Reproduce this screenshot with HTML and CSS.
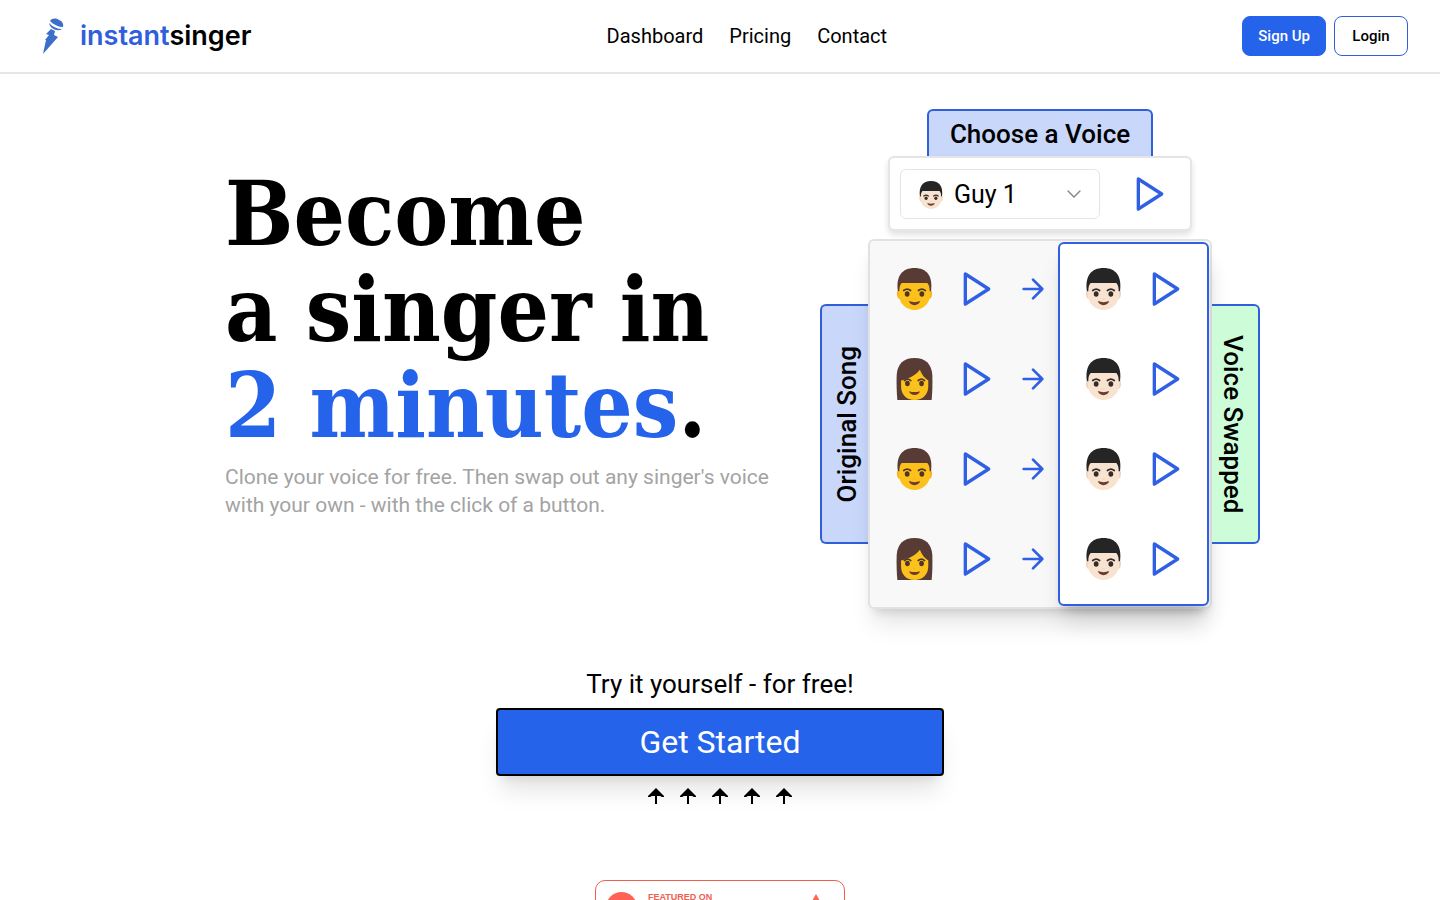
FILE: index.html
```html
<!DOCTYPE html>
<html lang="en">

<head>
    <meta charset="UTF-8" />
    <meta name="viewport" content="width=device-width, initial-scale=1.0" />
    <title>instantsinger</title>
    <link rel="stylesheet" href="styles.css">
</head>

<body>
    <!-- shared icons -->
    <svg class="sprite" aria-hidden="true">
        <symbol id="play" viewBox="0 0 24 24">
            <polygon points="5 3 19 12 5 21" fill="none" stroke="currentColor" stroke-width="2" stroke-linejoin="round" />
        </symbol>
        <symbol id="arrow" viewBox="0 0 24 24">
            <path d="M5 12h14M12 5l7 7-7 7" fill="none" stroke="currentColor" stroke-width="2" stroke-linecap="round" stroke-linejoin="round" />
        </symbol>
        <symbol id="arrow-up" viewBox="0 0 16 16">
            <path d="M8 0l8 8v1h-2l-2-1H9v8H7V8H4L2 9H0V8z" fill="currentColor" />
        </symbol>
        <symbol id="man" viewBox="0 0 105 123">
            <path class="ear" d="M6 66c-5 0-6 8-4 15 1 6 4 10 9 9zM99 66c5 0 6 8 4 15-1 6-4 10-9 9z" />
            <path class="skin" d="M6 38h93v36c0 31-23 49-46.500 49S6 105 6 74z" />
            <path class="hair" d="M4 68C-2 24 16 0 52.500 0S107 24 101 68h-4c0-12-2-19-7-24H15c-5 5-7 12-7 24z" />
            <path class="brow" d="M21 66q10-8 20 0M64 66q10-8 20 0" />
            <ellipse class="eye" cx="31" cy="76" rx="7" ry="8" />
            <ellipse class="eye" cx="74" cy="76" rx="7" ry="8" />
            <path class="nose" d="M46 88q6 3 13 0l-4 4h-5z" />
            <path class="mouth" d="M36 97q17 6 33 0c-3 16-30 16-33 0z" />
        </symbol>
        <symbol id="woman" viewBox="0 0 108 125">
            <path class="hair" d="M3 125C1 105 0 78 1 50 3 18 22 0 54 0s51 18 53 50c1 28 0 55-2 75z" />
            <path class="skin" d="M14 67c24-6 44-16 56-32 6 16 14 25 25 32v17c0 25-17 41-41 41S14 109 14 84z" />
            <path class="brow" d="M24 67q10-8 19 0M65 67q10-8 19 0" />
            <ellipse class="eye" cx="33" cy="76" rx="7" ry="8" />
            <ellipse class="eye" cx="75" cy="76" rx="7" ry="8" />
            <path class="nose" d="M48 89q6 3 12 0l-4 4h-4z" />
            <path class="mouth" d="M38 99q16 5 32 0c-3 15-29 15-32 0z" />
        </symbol>
    </svg>

    <header class="header">
        <a class="logo" href="#">
            <svg class="logo-icon" viewBox="0 0 32 40" aria-hidden="true">
                <path d="M18 5c2-3 6-3 9-1 3 1 5 4 4 7-4 0-9-2-13-6z" />
                <path d="M17 7c4 4 8 6 13 6-4 3-12 0-13-6z" />
                <path d="M19 13l4 2-1 4 4 2L11 38l3-14h-1l4-5-3-1z" />
            </svg>
            <span><span class="blue">instant</span>singer</span>
        </a>
        <nav class="nav">
            <a href="#">Dashboard</a>
            <a href="#">Pricing</a>
            <a href="#">Contact</a>
        </nav>
        <div class="account">
            <button class="btn btn-primary">Sign Up</button>
            <button class="btn">Login</button>
        </div>
    </header>

    <main>
        <section class="hero">
            <div class="intro">
                <h1>Become<br>a singer in<br><span>2 minutes</span>.</h1>
                <p>Clone your voice for free. Then swap out any singer's voice with your own - with the click of a button.</p>
            </div>

            <div class="demo">
                <label class="tab tab-top" for="voice">Choose a Voice</label>
                <div class="chooser">
                    <div class="select-wrap">
                        <svg class="face light select-face"><use href="#man" /></svg>
                        <select id="voice">
                            <option>Guy 1</option>
                        </select>
                        <svg class="chevron" viewBox="0 0 16 16" aria-hidden="true"><path d="M2 5l6 6 6-6" /></svg>
                    </div>
                    <button class="play" aria-label="Play voice"><svg><use href="#play" /></svg></button>
                </div>

                <div class="board">
                    <div class="tab tab-left"><span>Original Song</span></div>
                    <div class="panel">
                        <div class="originals">
                            <div class="row">
                                <svg class="face"><use href="#man" /></svg>
                                <button class="play" aria-label="Play original 1"><svg><use href="#play" /></svg></button>
                                <svg class="arrow"><use href="#arrow" /></svg>
                            </div>
                            <div class="row">
                                <svg class="face"><use href="#woman" /></svg>
                                <button class="play" aria-label="Play original 2"><svg><use href="#play" /></svg></button>
                                <svg class="arrow"><use href="#arrow" /></svg>
                            </div>
                            <div class="row">
                                <svg class="face"><use href="#man" /></svg>
                                <button class="play" aria-label="Play original 3"><svg><use href="#play" /></svg></button>
                                <svg class="arrow"><use href="#arrow" /></svg>
                            </div>
                            <div class="row">
                                <svg class="face"><use href="#woman" /></svg>
                                <button class="play" aria-label="Play original 4"><svg><use href="#play" /></svg></button>
                                <svg class="arrow"><use href="#arrow" /></svg>
                            </div>
                        </div>
                        <div class="swapped">
                            <div class="row">
                                <svg class="face light"><use href="#man" /></svg>
                                <button class="play" aria-label="Play swapped 1"><svg><use href="#play" /></svg></button>
                            </div>
                            <div class="row">
                                <svg class="face light"><use href="#man" /></svg>
                                <button class="play" aria-label="Play swapped 2"><svg><use href="#play" /></svg></button>
                            </div>
                            <div class="row">
                                <svg class="face light"><use href="#man" /></svg>
                                <button class="play" aria-label="Play swapped 3"><svg><use href="#play" /></svg></button>
                            </div>
                            <div class="row">
                                <svg class="face light"><use href="#man" /></svg>
                                <button class="play" aria-label="Play swapped 4"><svg><use href="#play" /></svg></button>
                            </div>
                        </div>
                    </div>
                    <div class="tab tab-right"><span>Voice Swapped</span></div>
                </div>
            </div>
        </section>

        <section class="cta">
            <p>Try it yourself - for free!</p>
            <button class="start">Get Started</button>
            <div class="arrows">
                <svg><use href="#arrow-up" /></svg>
                <svg><use href="#arrow-up" /></svg>
                <svg><use href="#arrow-up" /></svg>
                <svg><use href="#arrow-up" /></svg>
                <svg><use href="#arrow-up" /></svg>
            </div>
        </section>

        <a class="badge" href="#">
            <span class="badge-dot"></span>
            <span class="badge-text">FEATURED ON</span>
            <svg class="badge-vote" viewBox="0 0 10 9" aria-hidden="true"><path d="M5 0l5 9H0z" /></svg>
        </a>
    </main>
</body>

</html>
```

FILE: styles.css
```css
* {
    box-sizing: border-box;
}

body {
    margin: 0;
    font-family: Roboto, "Liberation Sans", sans-serif;
    color: #000;
    background-color: #fff;
}

a {
    color: inherit;
    text-decoration: none;
}

button,
select {
    font-family: inherit;
    color: inherit;
    cursor: pointer;
}

h1,
p {
    margin: 0;
}

svg {
    display: block;
}

.sprite {
    display: none;
}

/* header */

.header {
    display: flex;
    align-items: center;
    justify-content: space-between;
    height: 74px;
    padding: 0 32px;
    border-bottom: 2px solid #e5e5e5;
}

.logo {
    display: flex;
    align-items: center;
    gap: 16px;
    font-family: Inter, "Open Sans", sans-serif;
    font-size: 27px;
    font-weight: 600;
    line-height: 32px;
}

.logo-icon {
    width: 32px;
    height: 40px;
    fill: #3b6fc9;
}

.blue {
    color: #2f5fda;
}

.nav {
    display: flex;
    gap: 26px;
    font-size: 20px;
}

.account {
    display: flex;
    gap: 8px;
}

.btn {
    min-width: 74px;
    height: 40px;
    padding: 0 15px;
    font-size: 15px;
    font-weight: 500;
    background-color: #fff;
    border: 1px solid #2f5fda;
    border-radius: 8px;
}

.btn-primary {
    color: #fff;
    background-color: #2563eb;
    border-color: #2563eb;
}

/* hero */

.hero {
    display: flex;
    justify-content: space-between;
    max-width: 1080px;
    margin: 0 auto;
    padding-top: 35px;
}

.intro {
    max-width: 590px;
    padding: 56px 0 0 45px;
}

h1 {
    font-family: "DejaVu Serif Condensed", "DejaVu Serif", serif;
    font-size: 90px;
    font-weight: 700;
    line-height: 96px;
    white-space: nowrap;
}

h1 span {
    color: #2563eb;
}

.intro p {
    margin-top: 10px;
    font-size: 21px;
    line-height: 28px;
    color: #a3a3a3;
}

.demo {
    display: flex;
    flex-direction: column;
    align-items: center;
}

.tab {
    display: flex;
    align-items: center;
    justify-content: center;
    font-size: 26px;
    font-weight: 500;
    background-color: #c8d7fa;
    border: 2px solid #2f5fda;
}

.tab-top {
    width: 226px;
    height: 47px;
    border-bottom: none;
    border-radius: 6px 6px 0 0;
}

.tab-left,
.tab-right {
    width: 48px;
    height: 240px;
}

.tab span {
    writing-mode: vertical-rl;
    white-space: nowrap;
}

.tab-left {
    padding-left: 4px;
    border-right: none;
    border-radius: 6px 0 0 6px;
}

.tab-left span {
    transform: rotate(180deg);
}

.tab-right {
    padding-right: 4px;
    background-color: #ccfdd8;
    border-left: none;
    border-radius: 0 6px 6px 0;
}

.chooser {
    display: flex;
    align-items: center;
    gap: 30px;
    width: 304px;
    height: 75px;
    padding: 0 10px;
    background-color: #fff;
    border: 2px solid #e5e5e5;
    border-radius: 6px;
    box-shadow: 0 4px 6px rgba(0, 0, 0, 0.12);
}

.select-wrap {
    position: relative;
}

select {
    width: 200px;
    height: 50px;
    padding: 2px 36px 0 53px;
    font-size: 25px;
    background-color: #fff;
    border: 1px solid #e5e5e5;
    border-radius: 6px;
    appearance: none;
}

.face {
    --skin: #fcc21b;
    --ear: #f8ae1c;
    --hair: #583b35;
    --line: #4f352e;
    width: 45px;
    height: 42px;
}

.light {
    --skin: #f7e3cf;
    --ear: #f0d2bb;
    --hair: #252525;
    --line: #352b28;
}

.select-face {
    position: absolute;
    top: 12px;
    left: 16px;
    width: 30px;
    height: 28px;
}

.skin {
    fill: var(--skin);
}

.ear {
    fill: var(--ear);
}

.hair {
    fill: var(--hair);
}

.eye {
    fill: var(--line);
}

.brow {
    fill: none;
    stroke: var(--line);
    stroke-width: 5;
    stroke-linecap: round;
}

.nose {
    fill: var(--ear);
}

.mouth {
    fill: #6d3a2e;
}

.chevron {
    position: absolute;
    top: 17px;
    right: 18px;
    width: 16px;
    height: 16px;
    fill: none;
    stroke: #808080;
    stroke-width: 1.3;
    stroke-linecap: round;
    pointer-events: none;
}

.play {
    width: 40px;
    height: 40px;
    padding: 0;
    color: #2f5fe3;
    background: none;
    border: none;
}

.play svg {
    width: 40px;
    height: 40px;
}

.arrow {
    width: 32px;
    height: 32px;
    color: #2f5fe3;
}

.board {
    display: flex;
    align-items: center;
    margin-top: 8px;
}

.panel {
    display: flex;
    padding: 1px;
    background-color: #f8f8f8;
    border: 2px solid #e2e2e5;
    border-radius: 6px;
    box-shadow: 0 20px 25px -5px rgba(0, 0, 0, 0.1), 0 8px 10px -6px rgba(0, 0, 0, 0.15);
}

.originals {
    padding: 2px 9px 2px 21px;
}

.swapped {
    padding: 0 21px;
    background-color: #fff;
    border: 2px solid #2f5fe3;
    border-radius: 6px;
    box-shadow: 0 20px 25px -5px rgba(0, 0, 0, 0.12), 0 8px 10px -6px rgba(0, 0, 0, 0.2);
}

.row {
    display: flex;
    align-items: center;
    gap: 20px;
    height: 90px;
}

/* call to action */

.cta {
    display: flex;
    flex-direction: column;
    align-items: center;
    margin-top: 59px;
}

.cta p {
    font-size: 26px;
    line-height: 32px;
}

.start {
    width: 448px;
    max-width: 90%;
    height: 68px;
    margin-top: 8px;
    font-size: 32px;
    color: #fff;
    background-color: #2563eb;
    border: 2px solid #000;
    border-radius: 4px;
    box-shadow: 0 20px 25px -5px rgba(0, 0, 0, 0.1), 0 8px 10px -6px rgba(0, 0, 0, 0.1);
}

.arrows {
    display: flex;
    gap: 16px;
    margin-top: 12px;
}

.arrows svg {
    width: 16px;
    height: 16px;
}

.badge {
    display: flex;
    align-items: flex-start;
    width: 250px;
    height: 54px;
    margin: 76px auto 0;
    padding: 11px 23px 0 10px;
    color: #f0604f;
    border: 1px solid #f0604f;
    border-radius: 10px;
}

.badge-dot {
    width: 31px;
    height: 31px;
    background-color: #ff6154;
    border-radius: 50%;
}

.badge-text {
    margin-left: 11px;
    font-family: "Liberation Sans", sans-serif;
    font-size: 9px;
    font-weight: 700;
    line-height: 10px;
}

.badge-vote {
    width: 10px;
    height: 9px;
    margin: 2px 0 0 auto;
    fill: #ff6154;
}
```
